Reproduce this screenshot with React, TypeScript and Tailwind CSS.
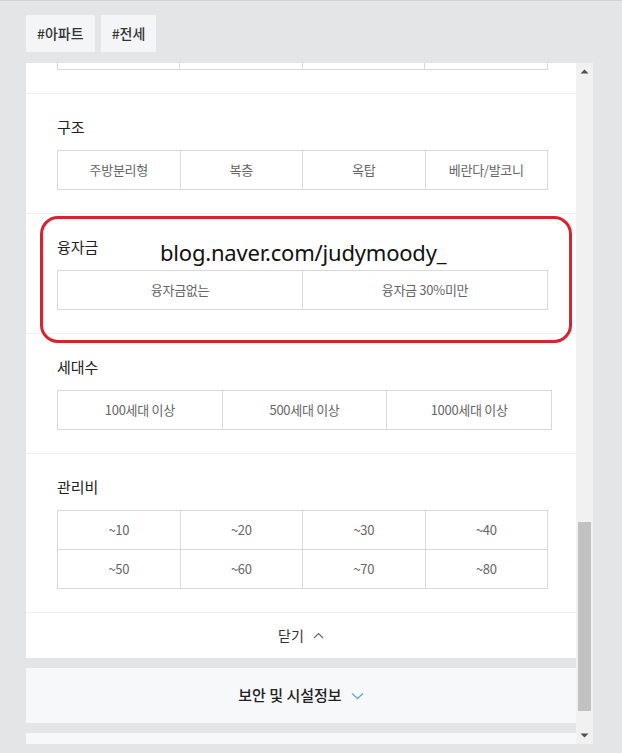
import React from "react";

const F = "font-['Noto_Sans_CJK_KR','Noto_Sans',sans-serif]";

function Grid({ rows, cols, width }: { rows: string[][]; cols: number; width: string }) {
  return (
    <div className={`${width} border-l border-t border-[#d9d9d9]`}>
      {rows.map((r, i) => (
        <div key={i} className={cols === 4 ? "grid grid-cols-4" : cols === 3 ? "grid grid-cols-3" : "grid grid-cols-2"}>
          {r.map((c, j) => (
            <div
              key={j}
              className="h-[39px] border-r border-b border-[#d9d9d9] flex items-center justify-center text-[13px] text-[#666] tracking-[-0.3px]"
            >
              {c}
            </div>
          ))}
        </div>
      ))}
    </div>
  );
}

function Section({ label, children }: { label: string; children: React.ReactNode }) {
  return (
    <div className="pt-[23px] pb-[23px] pl-[31px] border-b border-[#efefef] bg-white">
      <div className="h-[20px] leading-[20px] text-[15px] text-[#222] mb-[13px]">{label}</div>
      {children}
    </div>
  );
}

export default function App() {
  return (
    <div className={`relative w-[622px] h-[753px] bg-[#e4e5e7] border-t border-[#d2d3d5] ${F} overflow-hidden`}>
      {/* tags */}
      <div className="flex gap-[6px] pl-[26px] pt-[14px]">
        <div className="h-[37px] px-[11px] bg-[#f4f5f7] flex items-center text-[14px] text-[#333] font-medium">#아파트</div>
        <div className="h-[37px] px-[11px] bg-[#f4f5f7] flex items-center text-[14px] text-[#333] font-medium">#전세</div>
      </div>

      <div className="flex mt-[11px] ml-[26px] h-[681px]">
        {/* scroll content */}
        <div className="w-[550px] h-full overflow-hidden">
          <div className="mt-[-89px]">
            <div className="pt-[23px] pb-[23px] pl-[31px] border-b border-[#efefef] bg-white">
              <div className="h-[20px] mb-[13px]" />
              <div className="w-[491px] h-[40px] border border-[#d9d9d9] grid grid-cols-4">
                <div className="border-r border-[#d9d9d9]" />
                <div className="border-r border-[#d9d9d9]" />
                <div className="border-r border-[#d9d9d9]" />
                <div />
              </div>
            </div>
            <Section label="구조">
              <Grid width="w-[491px]" cols={4} rows={[["주방분리형", "복층", "옥탑", "베란다/발코니"]]} />
            </Section>
            <Section label="융자금">
              <Grid width="w-[491px]" cols={2} rows={[["융자금없는", "융자금 30%미만"]]} />
            </Section>
            <Section label="세대수">
              <Grid width="w-[495px]" cols={3} rows={[["100세대 이상", "500세대 이상", "1000세대 이상"]]} />
            </Section>
            <Section label="관리비">
              <Grid
                width="w-[491px]"
                cols={4}
                rows={[
                  ["~10", "~20", "~30", "~40"],
                  ["~50", "~60", "~70", "~80"],
                ]}
              />
            </Section>
            <div className="h-[45px] bg-white flex items-center justify-center gap-[9px]">
              <span className="text-[14px] text-[#333]">닫기</span>
              <svg width="11" height="7" viewBox="0 0 11 7" fill="none">
                <path d="M1 6 L5.5 1.5 L10 6" stroke="#666" strokeWidth="1.1" />
              </svg>
            </div>
            <div className="h-[10px]" />
            <div className="h-[55px] bg-[#f7f8fa] flex items-center justify-center gap-[9px]">
              <span className="text-[15px] text-[#222] font-medium">보안 및 시설정보</span>
              <svg width="13" height="8" viewBox="0 0 13 8" fill="none">
                <path d="M1 1.5 L6.5 6.5 L12 1.5" stroke="#6aa6d8" strokeWidth="1.4" />
              </svg>
            </div>
            <div className="h-[10px]" />
            <div className="h-[60px] bg-[#f7f8fa]" />
          </div>
        </div>
        {/* scrollbar */}
        <div className="w-[17px] h-full bg-[#f1f1f1] flex flex-col items-center">
          <div className="h-[17px] w-full flex items-center justify-center">
            <svg width="9" height="5" viewBox="0 0 9 5">
              <path d="M0.5 4.5 L4.5 0.5 L8.5 4.5 Z" fill="#505050" />
            </svg>
          </div>
          <div className="h-[442px]" />
          <div className="w-[13px] h-[189px] bg-[#c1c1c1]" />
          <div className="flex-1" />
          <div className="h-[17px] w-full flex items-center justify-center">
            <svg width="9" height="5" viewBox="0 0 9 5">
              <path d="M0.5 0.5 L8.5 0.5 L4.5 4.5 Z" fill="#505050" />
            </svg>
          </div>
        </div>
      </div>

      {/* red annotation box overlay */}
      <div className="absolute left-[40px] top-[215px] w-[532px] h-[127px] border-[3px] border-[#d8232f] rounded-[18px] pointer-events-none" />
      <div className="absolute left-[160px] top-[236px] h-[30px] leading-[30px] text-[22px] text-[#111] font-['Noto_Sans',sans-serif] tracking-[-0.2px]">
        blog.naver.com/judymoody_
      </div>
    </div>
  );
}
